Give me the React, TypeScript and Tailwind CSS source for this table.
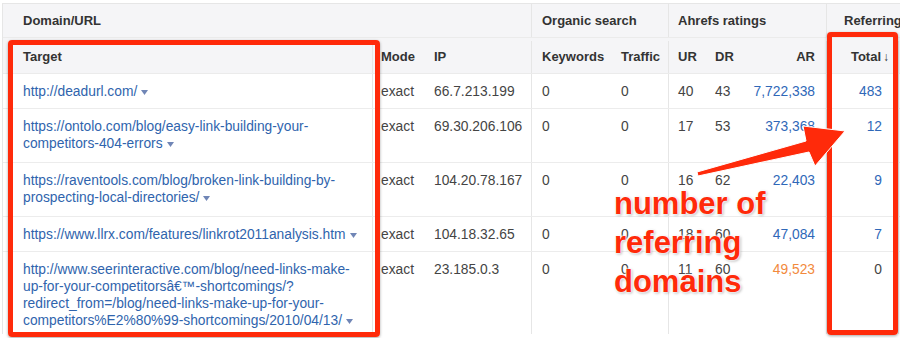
import React from "react";

type Row = {
  url: string[];
  ip: string;
  kw: string;
  traffic: string;
  ur: string;
  dr: string;
  ar: string;
  arTone: "blue" | "orange";
  total: string;
  totalLink: boolean;
  height: string;
};

const rows: Row[] = [
  {
    url: ["http://deadurl.com/"],
    ip: "66.7.213.199",
    kw: "0",
    traffic: "0",
    ur: "40",
    dr: "43",
    ar: "7,722,338",
    arTone: "blue",
    total: "483",
    totalLink: true,
    height: "h-[35px] border-b",
  },
  {
    url: ["https://ontolo.com/blog/easy-link-building-your-", "competitors-404-errors"],
    ip: "69.30.206.106",
    kw: "0",
    traffic: "0",
    ur: "17",
    dr: "53",
    ar: "373,368",
    arTone: "blue",
    total: "12",
    totalLink: true,
    height: "h-[54px] border-b",
  },
  {
    url: ["https://raventools.com/blog/broken-link-building-by-", "prospecting-local-directories/"],
    ip: "104.20.78.167",
    kw: "0",
    traffic: "0",
    ur: "16",
    dr: "62",
    ar: "22,403",
    arTone: "blue",
    total: "9",
    totalLink: true,
    height: "h-[54px] border-b",
  },
  {
    url: ["https://www.llrx.com/features/linkrot2011analysis.htm"],
    ip: "104.18.32.65",
    kw: "0",
    traffic: "0",
    ur: "18",
    dr: "60",
    ar: "47,084",
    arTone: "blue",
    total: "7",
    totalLink: true,
    height: "h-[35px] border-b",
  },
  {
    url: [
      "http://www.seerinteractive.com/blog/need-links-make-",
      "up-for-your-competitorsâ€™-shortcomings/?",
      "redirect_from=/blog/need-links-make-up-for-your-",
      "competitors%E2%80%99-shortcomings/2010/04/13/",
    ],
    ip: "23.185.0.3",
    kw: "0",
    traffic: "0",
    ur: "11",
    dr: "60",
    ar: "49,523",
    arTone: "orange",
    total: "0",
    totalLink: false,
    height: "h-[82px]",
  },
];

const cols = "grid grid-cols-[369px_53px_106px_79px_58px_37px_40px_81px_72px_1fr]";

function Caret() {
  return (
    <svg width="7" height="5" viewBox="0 0 7 5" className="ml-[4px] inline-block align-[1px]">
      <path d="M0 0h7L3.5 5z" fill="#7086b6" />
    </svg>
  );
}

function Cell({ className = "", children }: { className?: string; children?: React.ReactNode }) {
  return <div className={`pt-[9px] text-[13.8px] leading-[17px] ${className}`}>{children}</div>;
}

export default function App() {
  return (
    <div className="relative h-[338px] w-[900px] overflow-hidden bg-white font-['Liberation_Sans',Arial,sans-serif] text-[13px] text-[#444]">
      <div className="ml-[2px] mt-[3px] w-[1000px] border-l border-t border-[#e6e6e6]">
        {/* group header */}
        <div className="grid h-[34px] grid-cols-[528px_137px_158px_1fr] border-b border-[#ebebeb] bg-[#f5f5f7] font-bold text-[#333]">
          <div className="flex items-center pl-[20px]">Domain/URL</div>
          <div className="flex items-center border-l border-[#e6e6e6] pl-[10px]">Organic search</div>
          <div className="flex items-center border-l border-[#e6e6e6] pl-[9px]">Ahrefs ratings</div>
          <div className="flex items-center border-l border-[#e6e6e6] pl-[17px]">Referring domains</div>
        </div>

        {/* column header */}
        <div className={`${cols} h-[36px] border-b border-[#ebebeb] bg-[#f5f5f7] pt-[3px] font-bold text-[#333]`}>
          <div className="flex items-center pl-[20px]">Target</div>
          <div className="flex items-center border-l border-[#e6e6e6] pl-[8px]">Mode</div>
          <div className="flex items-center pl-[9px]">IP</div>
          <div className="flex items-center border-l border-[#e6e6e6] pl-[10px]">Keywords</div>
          <div className="flex items-center pl-[11px]">Traffic</div>
          <div className="flex items-center border-l border-[#e6e6e6] pl-[9px]">UR</div>
          <div className="flex items-center pl-[10px]">DR</div>
          <div className="flex items-center justify-end pr-[11px]">AR</div>
          <div className="flex items-center justify-end border-l border-[#e6e6e6] pr-[9px]">
            Total<span className="ml-[2px] text-[12px]">↓</span>
          </div>
          <div className="border-l border-[#e6e6e6]" />
        </div>

        {rows.map((r, i) => (
          <div key={i} className={`${cols} ${r.height} border-[#ececec] bg-white`}>
            <Cell className="pl-[20px] text-[#2f64ad]">
              {r.url.map((line, j) => (
                <div key={j} className="whitespace-nowrap">
                  {line}
                  {j === r.url.length - 1 ? <Caret /> : null}
                </div>
              ))}
            </Cell>
            <Cell className="border-l border-[#e6e6e6] pl-[8px]">exact</Cell>
            <Cell className="pl-[9px]">{r.ip}</Cell>
            <Cell className="border-l border-[#e6e6e6] pl-[10px]">{r.kw}</Cell>
            <Cell className="pl-[11px]">{r.traffic}</Cell>
            <Cell className="border-l border-[#e6e6e6] pl-[9px]">{r.ur}</Cell>
            <Cell className="pl-[10px]">{r.dr}</Cell>
            <Cell className={`pr-[11px] text-right ${r.arTone === "orange" ? "text-[#f28a3c]" : "text-[#2f68b8]"}`}>
              {r.ar}
            </Cell>
            <Cell className={`border-l border-[#e6e6e6] pr-[16px] text-right ${r.totalLink ? "text-[#2f68b8]" : ""}`}>
              {r.total}
            </Cell>
            <div className="border-l border-[#e6e6e6]" />
          </div>
        ))}
      </div>

      {/* annotation overlay */}
      <div className="pointer-events-none absolute left-[8px] top-[40px] h-[297px] w-[372px] rounded-[4px] border-[5px] border-[#ff2a0a] shadow-[0_1px_3px_rgba(0,0,0,0.35)]" />
      <div className="pointer-events-none absolute left-[827px] top-[32px] h-[303px] w-[71px] rounded-[4px] border-[5px] border-[#ff2a0a] shadow-[0_1px_3px_rgba(0,0,0,0.35)]" />
      <svg className="pointer-events-none absolute left-0 top-0" width="900" height="338" viewBox="0 0 900 338">
        <polygon
          points="697,172 806,141 803,126 845,131 815,166 809,152 698,176"
          fill="#ff2a0a"
          stroke="#fff"
          strokeWidth="1"
          strokeLinejoin="round"
        />
      </svg>
      <div className="pointer-events-none absolute left-[614px] top-[184px] text-[31px] font-bold leading-[39px] text-[#ff2a0a] [text-shadow:0_0_2px_#fff,0_0_2px_#fff,0_0_3px_#fff,1px_1px_3px_rgba(0,0,0,0.4)]">
        <div>number of</div>
        <div>referring</div>
        <div>domains</div>
      </div>
    </div>
  );
}
